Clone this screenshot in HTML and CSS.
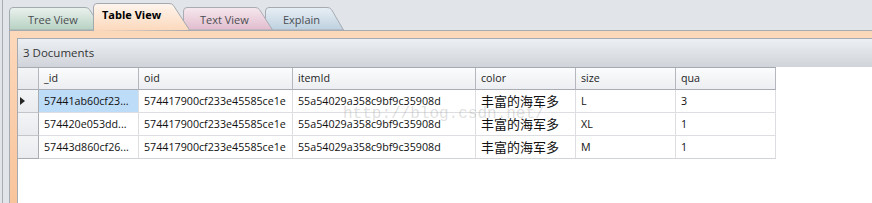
FILE: index.html
```html
<!DOCTYPE html>
<html>
<head>
<meta charset="utf-8">
<link rel="stylesheet" href="styles.css">
</head>
<body>
<div class="app">
  <div class="tabs">
    <div class="tab tab-tree">
      <svg class="tab-shape" width="94" height="23" viewBox="0 0 94 23">
        <defs><linearGradient id="gTree" x1="0" y1="0" x2="0" y2="1"><stop offset="0" stop-color="#ebf2ee"/><stop offset="1" stop-color="#b6d1c2"/></linearGradient></defs>
        <path d="M0.5,23 V4 Q0.5,0.5 4,0.5 H76 Q79,0.5 80.5,2.5 L93.5,23 Z" fill="url(#gTree)" stroke="#a3aab0"/>
      </svg>
      <span class="tab-label">Tree View</span>
    </div>
    <div class="tab tab-table">
      <svg class="tab-shape" width="97" height="28" viewBox="0 0 97 28">
        <defs><linearGradient id="gTable" x1="0" y1="0" x2="0" y2="1"><stop offset="0" stop-color="#fef5ee"/><stop offset="1" stop-color="#fcd8bb"/></linearGradient></defs>
        <path d="M0.5,28 V4 Q0.5,0.5 4,0.5 H76 Q79,0.5 80.5,2.5 L96.5,27" fill="url(#gTable)" stroke="#a3a9b0"/>
      </svg>
      <span class="tab-label">Table View</span>
    </div>
    <div class="tab tab-text">
      <svg class="tab-shape" width="90" height="23" viewBox="0 0 90 23">
        <defs><linearGradient id="gText" x1="0" y1="0" x2="0" y2="1"><stop offset="0" stop-color="#f6e8ee"/><stop offset="1" stop-color="#e1bccd"/></linearGradient></defs>
        <path d="M0.5,23 V4 Q0.5,0.5 4,0.5 H72 Q75,0.5 76.5,2.5 L89.5,23 Z" fill="url(#gText)" stroke="#a9acb3"/>
      </svg>
      <span class="tab-label">Text View</span>
    </div>
    <div class="tab tab-explain">
      <svg class="tab-shape" width="79" height="23" viewBox="0 0 79 23">
        <defs><linearGradient id="gExplain" x1="0" y1="0" x2="0" y2="1"><stop offset="0" stop-color="#e8eff5"/><stop offset="1" stop-color="#bdd0df"/></linearGradient></defs>
        <path d="M0.5,23 V4 Q0.5,0.5 4,0.5 H62 Q65,0.5 66.5,2.5 L78.5,23 Z" fill="url(#gExplain)" stroke="#a6abb2"/>
      </svg>
      <span class="tab-label">Explain</span>
    </div>
  </div>
  <div class="panel">
    <div class="content">
      <div class="bar">3 Documents</div>
      <div class="grid">
        <div class="hc rh"></div>
        <div class="hc">_id</div>
        <div class="hc">oid</div>
        <div class="hc">itemId</div>
        <div class="hc">color</div>
        <div class="hc">size</div>
        <div class="hc">qua</div>

        <div class="rc"><span class="marker"></span></div>
        <div class="c sel">57441ab60cf23...</div>
        <div class="c">574417900cf233e45585ce1e</div>
        <div class="c">55a54029a358c9bf9c35908d</div>
        <div class="c cjk">丰富的海军多</div>
        <div class="c">L</div>
        <div class="c">3</div>

        <div class="rc"></div>
        <div class="c">574420e053dd...</div>
        <div class="c">574417900cf233e45585ce1e</div>
        <div class="c">55a54029a358c9bf9c35908d</div>
        <div class="c cjk">丰富的海军多</div>
        <div class="c">XL</div>
        <div class="c">1</div>

        <div class="rc last"></div>
        <div class="c last">57443d860cf26...</div>
        <div class="c last">574417900cf233e45585ce1e</div>
        <div class="c last">55a54029a358c9bf9c35908d</div>
        <div class="c last cjk">丰富的海军多</div>
        <div class="c last">M</div>
        <div class="c last">1</div>
      </div>
    </div>
  </div>
  <div class="watermark">http://blog.csdn.net/</div>
</div>
</body>
</html>
```

FILE: styles.css
```css
* { box-sizing: border-box; }
html, body { margin: 0; padding: 0; }
body {
  width: 872px;
  height: 203px;
  overflow: hidden;
  background: #e1e5ea;
  font-family: "Open Sans", "Noto Sans", sans-serif;
  font-size: 11px;
  color: #1e1e1e;
}
.app {
  position: relative;
  height: 203px;
  margin-left: 2px;
  border-left: 1px solid #a7acb2;
  padding-left: 6px;
  display: flex;
  flex-direction: column;
}
.tabs {
  height: 30px;
  display: flex;
  align-items: flex-end;
  position: relative;
  z-index: 2;
  flex: none;
}
.tab {
  position: relative;
  height: 23px;
  flex: none;
  color: #4a4d52;
}
.tab-shape {
  position: absolute;
  left: 0;
  top: 0;
  display: block;
}
.tab-label {
  position: relative;
  display: block;
  line-height: 23px;
  padding-top: 1px;
  white-space: nowrap;
}
.tab-tree { width: 94px; z-index: 3; }
.tab-tree .tab-label { padding-left: 19px; }
.tab-table {
  width: 97px;
  height: 28px;
  margin-left: -10px;
  margin-bottom: -1px;
  z-index: 4;
  color: #000;
  font-weight: bold;
}
.tab-table .tab-label { padding-left: 9px; line-height: 24px; padding-top: 0; }
.tab-text { width: 90px; margin-left: -7px; z-index: 2; }
.tab-text .tab-label { padding-left: 17px; }
.tab-explain { width: 79px; margin-left: -8px; z-index: 1; }
.tab-explain .tab-label { padding-left: 18px; }

.panel {
  flex: 1;
  border-top: 1px solid #a6abb2;
  border-left: 1px solid #a6abb2;
  padding: 7px 0 0 7px;
  background: linear-gradient(#fcd8bb, #f8c49c);
  display: flex;
  flex-direction: column;
}
.content {
  flex: 1;
  background: #fff;
  border-top: 1px solid #a6abb2;
  border-left: 1px solid #a6abb2;
}
.bar {
  height: 28px;
  line-height: 28px;
  padding-left: 5px;
  color: #353535;
  background: linear-gradient(#eceff3, #d0d4da);
  font-size: 11.5px;
}
.grid {
  display: grid;
  grid-template-columns: 21px 100px 154px 183px 100px 100px 100px;
  grid-template-rows: 22px 23px 23px 23px;
  width: 758px;
  border-top: 1px solid #a6abb1;
  font-size: 10.7px;
}
.hc {
  background: linear-gradient(#fbfcfd, #eceef1);
  border-right: 1px solid #b4b8be;
  border-bottom: 1px solid #a9adb3;
  padding-left: 5px;
  line-height: 21px;
  white-space: nowrap;
}
.hc.rh { padding-left: 0; background: linear-gradient(#f4f5f7, #e7e9ec); }
.rc {
  background: linear-gradient(#f3f4f6, #e9ebee);
  border-right: 1px solid #a9adb3;
  border-bottom: 1px solid #c2c5ca;
  display: flex;
  align-items: center;
  padding-left: 2px;
}
.rc.last { border-bottom-color: #a9adb3; }
.marker {
  width: 0;
  height: 0;
  border-left: 5px solid #262626;
  border-top: 4px solid transparent;
  border-bottom: 4px solid transparent;
}
.c {
  border-right: 1px solid #dcdee1;
  border-bottom: 1px solid #dcdee1;
  padding-left: 5px;
  line-height: 22px;
  white-space: nowrap;
  overflow: hidden;
  color: #111;
}
.c.last { border-bottom-color: #d0d3d7; }
.c.sel { background: #bddcf8; }
.cjk {
  font-family: "Noto Sans CJK SC", sans-serif;
  font-size: 13px;
}
.watermark {
  position: absolute;
  left: 340px;
  top: 106px;
  font-family: "Liberation Mono", monospace;
  font-size: 16px;
  line-height: 16px;
  color: rgba(150, 150, 150, 0.3);
  white-space: nowrap;
  pointer-events: none;
  z-index: 5;
}
```
